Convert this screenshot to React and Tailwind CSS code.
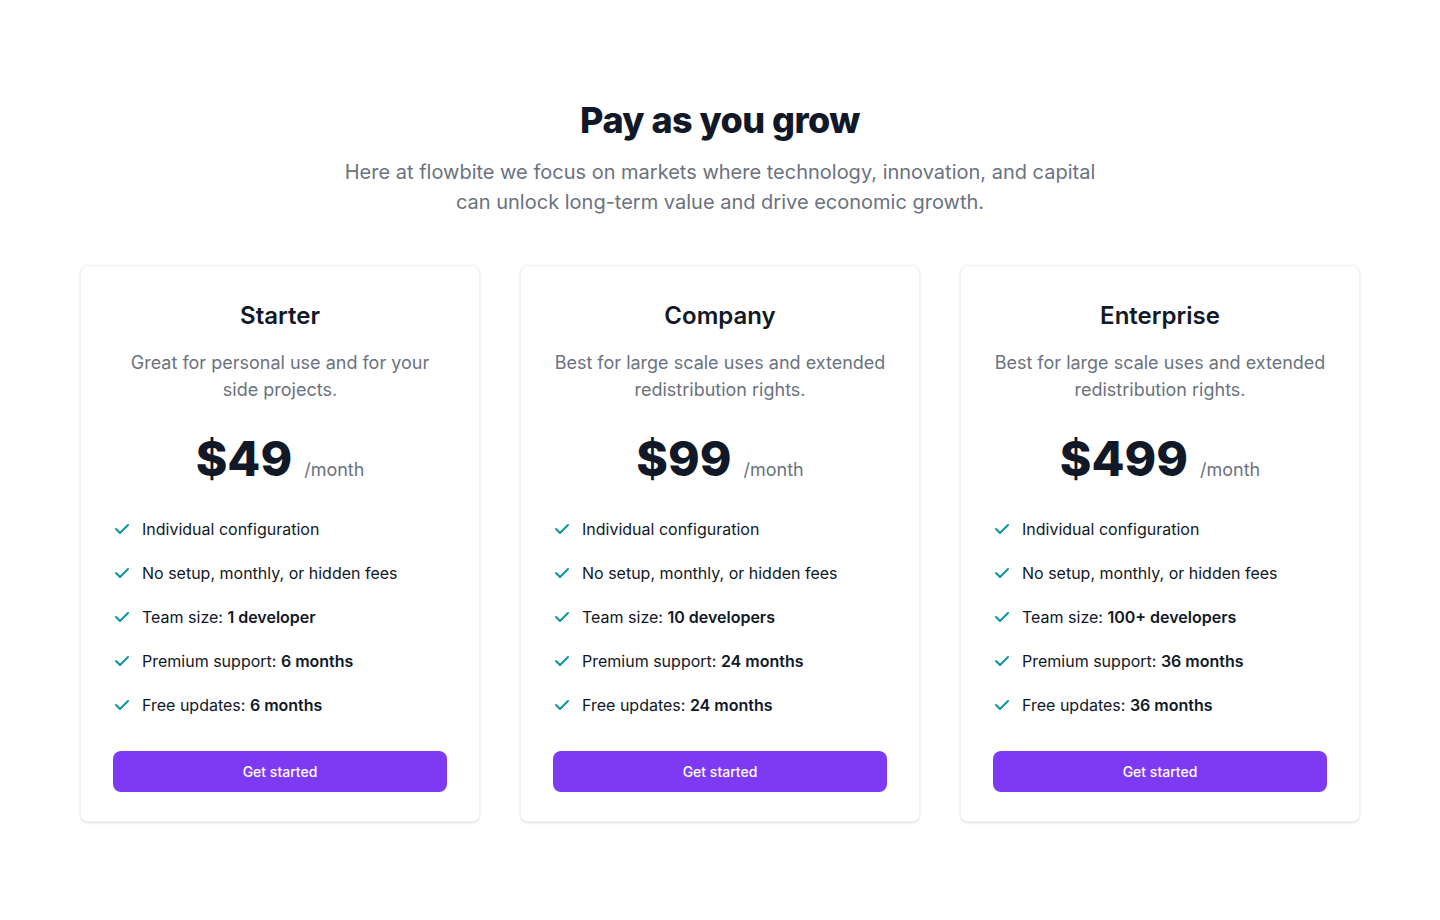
import React from "react";

const plans = [
  {
    name: "Starter",
    desc: ["Great for personal use and for your", "side projects."],
    price: "$49",
    team: "1 developer",
    support: "6 months",
    updates: "6 months",
  },
  {
    name: "Company",
    desc: ["Best for large scale uses and extended", "redistribution rights."],
    price: "$99",
    team: "10 developers",
    support: "24 months",
    updates: "24 months",
  },
  {
    name: "Enterprise",
    desc: ["Best for large scale uses and extended", "redistribution rights."],
    price: "$499",
    team: "100+ developers",
    support: "36 months",
    updates: "36 months",
  },
];

function Check() {
  return (
    <svg className="w-5 h-5 shrink-0 -ml-px text-[#0e949c]" viewBox="0 0 20 20" fill="currentColor">
      <path
        fillRule="evenodd"
        d="M16.707 5.293a1 1 0 010 1.414l-8 8a1 1 0 01-1.414 0l-4-4a1 1 0 011.414-1.414L8 12.586l7.293-7.293a1 1 0 011.414 0z"
        clipRule="evenodd"
      />
    </svg>
  );
}

function Item({ children }) {
  return (
    <li className="flex items-center gap-[10px] h-7 text-base text-[#111827]">
      <Check />
      <span>{children}</span>
    </li>
  );
}

function Card({ p }) {
  return (
    <div className="flex flex-col px-8 pt-[34px] pb-[29px] text-center bg-white rounded-lg border border-gray-100 shadow-[0_1px_3px_0_rgba(0,0,0,0.1),0_1px_2px_-1px_rgba(0,0,0,0.1)]">
      <h3 className="mb-[17px] text-2xl leading-8 font-semibold text-[#111827]">{p.name}</h3>
      <p className="text-lg leading-[27px] text-[#6b7280]">
        {p.desc[0]}
        <br />
        {p.desc[1]}
      </p>
      <div className="flex justify-center items-baseline mt-8 mb-[31px]">
        <span className="mr-3 text-5xl leading-none font-extrabold text-[#111827]">{p.price}</span>
        <span className="text-lg text-[#6b7280]">/month</span>
      </div>
      <ul className="mb-8 flex flex-col gap-4 text-left">
        <Item>Individual configuration</Item>
        <Item>No setup, monthly, or hidden fees</Item>
        <Item>
          Team size: <span className="font-semibold">{p.team}</span>
        </Item>
        <Item>
          Premium support: <span className="font-semibold">{p.support}</span>
        </Item>
        <Item>
          Free updates: <span className="font-semibold">{p.updates}</span>
        </Item>
      </ul>
      <button className="w-full h-[41px] rounded-lg bg-[#7e3af2] text-white text-sm font-medium">
        Get started
      </button>
    </div>
  );
}

export default function App() {
  return (
    <section
      className="bg-white min-h-screen pt-[100px]"
      style={{ fontFamily: "Inter, 'Noto Sans', sans-serif" }}
    >
      <div className="max-w-[1280px] mx-auto">
        <div className="text-center mb-[48px]">
          <h2 className="mb-[17px] text-4xl leading-10 font-extrabold tracking-[-0.015em] text-[#111827]">
            Pay as you grow
          </h2>
          <p className="max-w-3xl mx-auto text-xl leading-[30px] text-[#6b7280]">
            Here at flowbite we focus on markets where technology, innovation, and capital can unlock
            long-term value and drive economic growth.
          </p>
        </div>
        <div className="grid grid-cols-3 gap-10">
          {plans.map((p) => (
            <Card key={p.name} p={p} />
          ))}
        </div>
      </div>
    </section>
  );
}
